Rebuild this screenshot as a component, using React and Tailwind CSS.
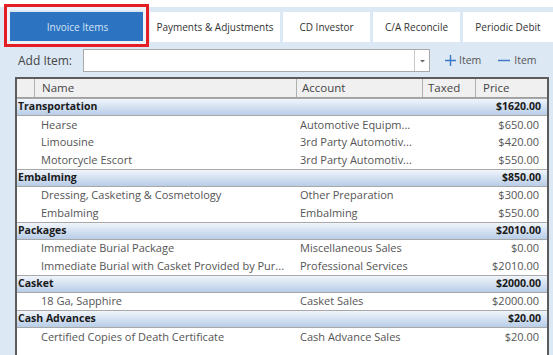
import React from 'react';

const groups = [
  { name: 'Transportation', total: '$1620.00', items: [
    ['Hearse', 'Automotive Equipm...', '$650.00'],
    ['Limousine', '3rd Party Automotiv...', '$420.00'],
    ['Motorcycle Escort', '3rd Party Automotiv...', '$550.00'],
  ]},
  { name: 'Embalming', total: '$850.00', items: [
    ['Dressing, Casketing & Cosmetology', 'Other Preparation', '$300.00'],
    ['Embalming', 'Embalming', '$550.00'],
  ]},
  { name: 'Packages', total: '$2010.00', items: [
    ['Immediate Burial Package', 'Miscellaneous Sales', '$0.00'],
    ['Immediate Burial with Casket Provided by Pur...', 'Professional Services', '$2010.00'],
  ]},
  { name: 'Casket', total: '$2000.00', items: [
    ['18 Ga, Sapphire', 'Casket Sales', '$2000.00'],
  ]},
  { name: 'Cash Advances', total: '$20.00', items: [
    ['Certified Copies of Death Certificate', 'Cash Advance Sales', '$20.00'],
  ]},
];

export default function App() {
  return (
    <div
      className="relative w-[553px] h-[355px] overflow-hidden bg-[#dce8f4] flex flex-col text-[10.5px]"
      style={{ fontFamily: '"Open Sans", "DejaVu Sans", sans-serif' }}
    >
      <div className="h-[7px] bg-white shrink-0" />
      {/* Tabs */}
      <div className="flex h-[35px] pt-[5px] shrink-0 text-[10px]">
        <div className="ml-[10px] w-[135px] h-[30px] bg-[#2c73c2] text-[#d6e4f4] flex items-center justify-center">
          Invoice Items
        </div>
        <div className="ml-[5px] w-[130px] h-[30px] bg-white text-[#333] flex items-center justify-center">
          Payments &amp; Adjustments
        </div>
        <div className="ml-[3px] w-[87px] h-[30px] bg-white text-[#333] flex items-center justify-center">
          CD Investor
        </div>
        <div className="ml-[3px] w-[87px] h-[30px] bg-white text-[#333] flex items-center justify-center">
          C/A Reconcile
        </div>
        <div className="ml-[3px] flex-1 h-[30px] bg-white text-[#333] flex items-center justify-center">
          Periodic Debit
        </div>
      </div>
      {/* highlight box */}
      <div className="absolute left-[4px] top-[4px] w-[145px] h-[43px] border-[3px] border-[#e31e24] shadow-[inset_0_0_0_3px_#eef3f9]" />

      {/* Add item row */}
      <div className="flex items-center h-[23px] mt-[7px] shrink-0">
        <div className="ml-[18px] w-[65px] text-[12px] text-[#444]">Add Item:</div>
        <div className="w-[347px] h-[23px] bg-white border border-[#a9a9a9] flex justify-end">
          <div className="w-[15px] h-full border-l border-[#c8c8c8] flex items-center justify-center">
            <svg width="7" height="4" viewBox="0 0 7 4"><path d="M1 1h5L3.5 3.5z" fill="#666" /></svg>
          </div>
        </div>
        <div className="ml-[15px] flex items-center text-[#555]">
          <svg width="11" height="11" viewBox="0 0 11 11" className="mr-[3px]">
            <path d="M5.5 0v11M0 5.5h11" stroke="#3a78c8" strokeWidth="1.4" />
          </svg>
          <span>Item</span>
        </div>
        <div className="ml-[17px] flex items-center text-[#555]">
          <svg width="12" height="11" viewBox="0 0 12 11" className="mr-[4px]">
            <path d="M0 5.5h12" stroke="#3a78c8" strokeWidth="1.4" />
          </svg>
          <span>Item</span>
        </div>
      </div>

      {/* Grid */}
      <div className="mt-[5px] ml-[15px] w-[534px] flex-1 bg-white border-l-2 border-r-2 border-t-2 border-[#5c5c5c] flex flex-col">
        <div className="h-[19px] bg-[#f0f0f0] border-b border-[#a0a0a0] flex text-[#444] text-[11.5px] shrink-0">
          <div className="w-[17px]" />
          <div className="w-[262px] border-l border-[#b0b0b0] pl-[7px] flex items-center">Name</div>
          <div className="w-[126px] border-l border-[#b0b0b0] pl-[5px] flex items-center">Account</div>
          <div className="w-[53px] border-l border-[#b0b0b0] pl-[5px] flex items-center">Taxed</div>
          <div className="flex-1 border-l border-[#b0b0b0] pl-[7px] flex items-center">Price</div>
        </div>
        {groups.map((g) => (
          <React.Fragment key={g.name}>
            <div className="h-[18px] shrink-0 flex items-center justify-between bg-gradient-to-b from-[#f1f5fb] to-[#b8cde7] border-t border-[#a8a8a8] border-b border-[#7d9bc0] font-bold text-[#1a1a1a] pl-[1px] pr-[6px]">
              <span>{g.name}</span>
              <span>{g.total}</span>
            </div>
            {g.items.map((it, i) => (
              <div key={i} className="h-[17.5px] shrink-0 flex items-center text-[#555] text-[11px]">
                <div className="w-[24px]" />
                <div className="w-[259px] whitespace-nowrap overflow-hidden">{it[0]}</div>
                <div className="w-[130px] whitespace-nowrap overflow-hidden">{it[1]}</div>
                <div className="w-[53px]" />
                <div className="flex-1 text-right pr-[8px]">{it[2]}</div>
              </div>
            ))}
          </React.Fragment>
        ))}
      </div>
    </div>
  );
}
